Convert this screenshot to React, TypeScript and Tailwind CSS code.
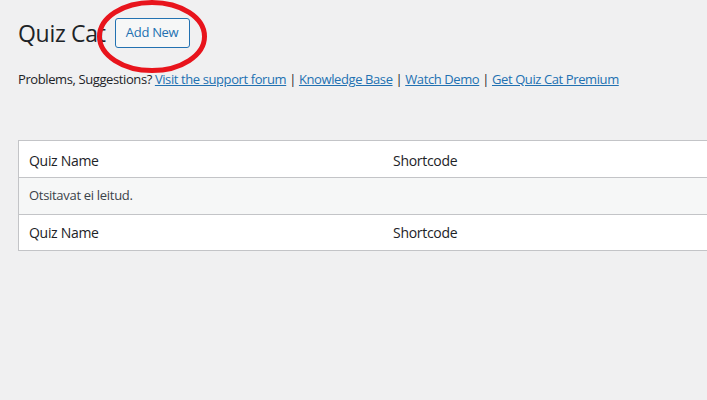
import React from 'react';

const font = { fontFamily: '"Segoe UI", "Open Sans", "Liberation Sans", sans-serif' };

export default function App() {
    const links = ['Visit the support forum', 'Knowledge Base', 'Watch Demo', 'Get Quiz Cat Premium'];

    return (
        <div className="min-h-[400px] w-[707px] overflow-hidden bg-[#f0f0f1] text-[#3c434a]" style={font}>
            <div className="pl-[18px]">
                {/* Header */}
                <div className="relative flex items-center pt-[18px]">
                    <h1 className="text-[23px] font-normal leading-[30px] tracking-[-0.3px] text-[#1d2327]">Quiz Cat</h1>
                    <button className="ml-[9px] h-[30px] w-[75px] rounded-[3px] border border-[#2271b1] bg-[#f6f7f7] text-[13px] tracking-[-0.3px] text-[#2271b1]">
                        Add New
                    </button>
                    <svg className="absolute left-[76px] top-[-3px]" width="116" height="80" viewBox="0 0 116 80">
                        <ellipse cx="58" cy="39.5" rx="52.5" ry="34" fill="none" stroke="#e8141c" strokeWidth="5" />
                    </svg>
                </div>

                {/* Links */}
                <p className="mt-[22px] text-[13px] leading-[18px] tracking-[-0.4px] text-[#1d2327]">
                    Problems, Suggestions?{' '}
                    {links.map((l, i) => (
                        <React.Fragment key={l}>
                            <a className="text-[#2271b1] underline">{l}</a>
                            {i < links.length - 1 && ' | '}
                        </React.Fragment>
                    ))}
                </p>

                {/* Table */}
                <div className="mt-[52px] w-[720px] border border-[#c3c4c7] bg-white">
                    <div className="flex h-[37px] items-center border-b border-[#c3c4c7] pt-[2px] text-[14px] tracking-[-0.3px] text-[#1d2327]">
                        <div className="w-[374px] pl-[10px]">Quiz Name</div>
                        <div>Shortcode</div>
                    </div>
                    <div className="flex h-[37px] items-center border-b border-[#c3c4c7] bg-[#f6f7f7] pl-[10px] text-[13px] tracking-[-0.3px]">
                        Otsitavat ei leitud.
                    </div>
                    <div className="flex h-[35px] items-center text-[14px] tracking-[-0.3px] text-[#1d2327]">
                        <div className="w-[374px] pl-[10px]">Quiz Name</div>
                        <div>Shortcode</div>
                    </div>
                </div>
            </div>
        </div>
    );
}
